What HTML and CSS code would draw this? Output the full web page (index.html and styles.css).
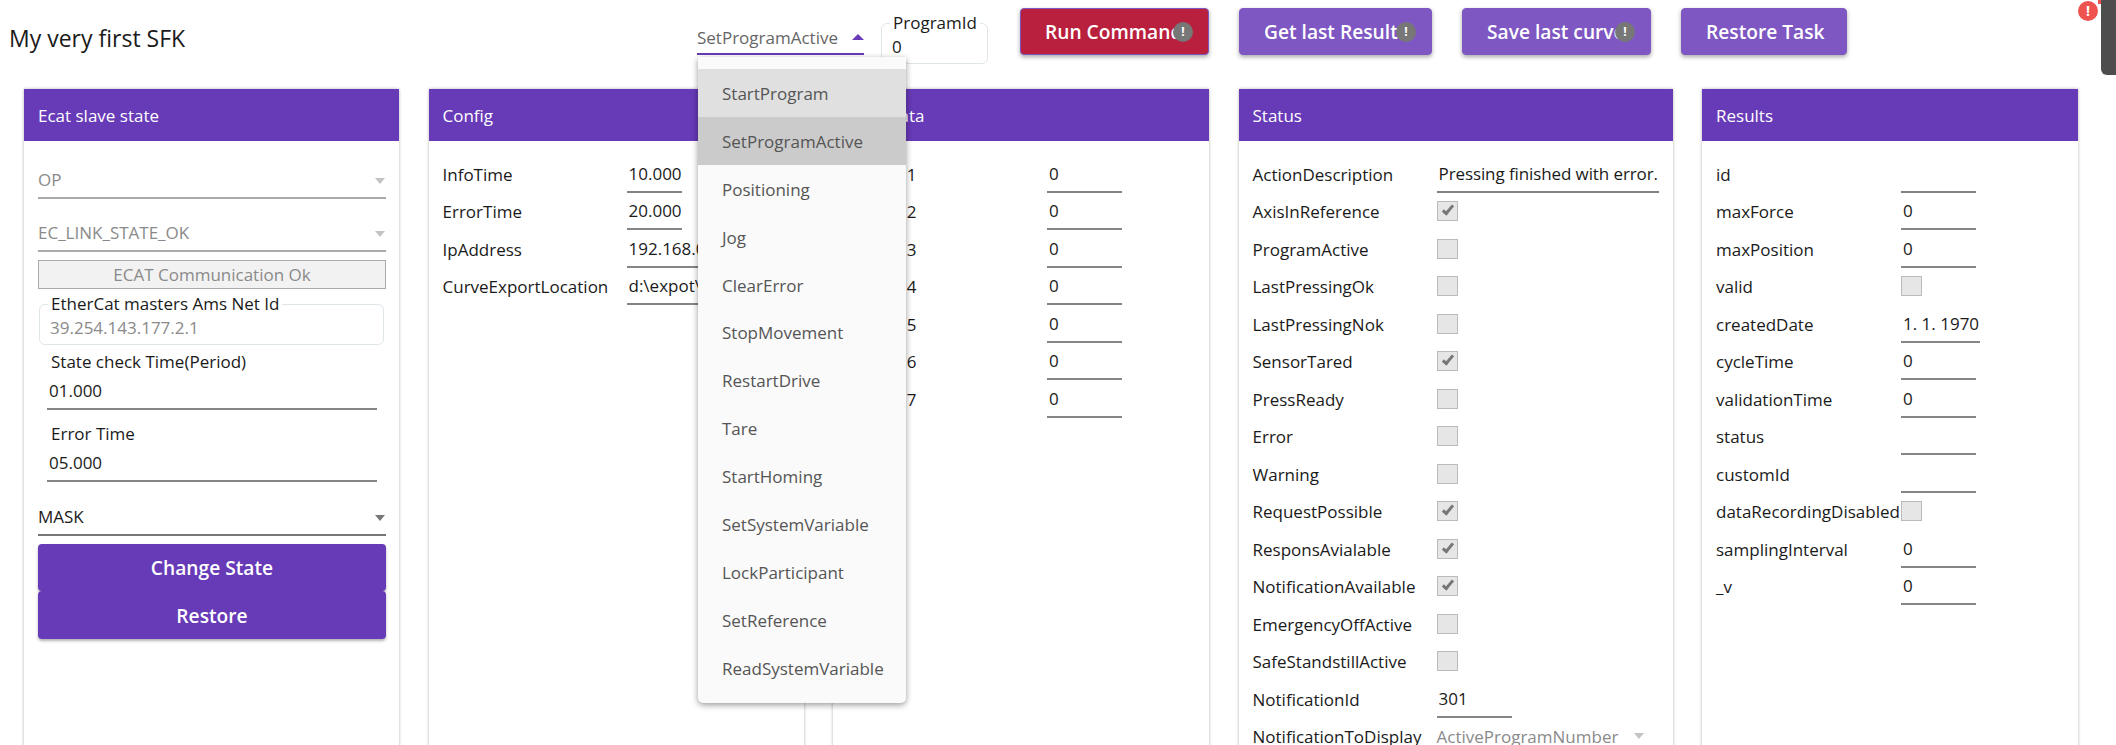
FILE: index.html
```html
<!DOCTYPE html>
<html>
<head>
  <title>My very first SFK</title>
  <link rel="stylesheet" href="styles.css">
</head>
<body>
  <div class="topbar">
    <div class="title">My very first SFK</div>
    <div class="cmd-select">
      <span>SetProgramActive</span>
      <i class="arrow-up"></i>
    </div>
    <fieldset class="box program-id">
      <legend>ProgramId</legend>
      <div>0</div>
    </fieldset>
    <div class="buttons">
      <button class="btn btn-run">Run Command<span class="badge">!</span></button>
      <button class="btn btn-light">Get last Result<span class="badge">!</span></button>
      <button class="btn btn-light">Save last curve<span class="badge">!</span></button>
      <button class="btn btn-light">Restore Task</button>
    </div>
  </div>

  <div class="cards">
    <div class="card">
      <div class="card-head">Ecat slave state</div>
      <div class="card-body slave">
        <div class="select disabled"><span>OP</span><i class="arrow"></i></div>
        <div class="select disabled second"><span>EC_LINK_STATE_OK</span><i class="arrow"></i></div>
        <div class="comm-ok">ECAT Communication Ok</div>
        <fieldset class="box net-id">
          <legend>EtherCat masters Ams Net Id</legend>
          <div>39.254.143.177.2.1</div>
        </fieldset>
        <div class="field-label first">State check Time(Period)</div>
        <div class="val wide">01.000</div>
        <div class="field-label">Error Time</div>
        <div class="val wide">05.000</div>
        <div class="select mask"><span>MASK</span><i class="arrow"></i></div>
        <button class="btn-block change">Change State</button>
        <button class="btn-block restore">Restore</button>
      </div>
    </div>

    <div class="card">
      <div class="card-head">Config</div>
      <div class="card-body rows">
        <div class="row"><span>InfoTime</span><div class="val w55">10.000</div></div>
        <div class="row"><span>ErrorTime</span><div class="val w55">20.000</div></div>
        <div class="row"><span>IpAddress</span><div class="val">192.168.0.10</div></div>
        <div class="row"><span>CurveExportLocation</span><div class="val">d:\expot\curves</div></div>
      </div>
    </div>

    <div class="card">
      <div class="card-head">Task Data</div>
      <div class="card-body rows data">
        <div class="row"><span class="num">Param1</span><div class="val">0</div></div>
        <div class="row"><span class="num">Param2</span><div class="val">0</div></div>
        <div class="row"><span class="num">Param3</span><div class="val">0</div></div>
        <div class="row"><span class="num">Param4</span><div class="val">0</div></div>
        <div class="row"><span class="num">Param5</span><div class="val">0</div></div>
        <div class="row"><span class="num">Param6</span><div class="val">0</div></div>
        <div class="row"><span class="num">Param7</span><div class="val">0</div></div>
      </div>
    </div>

    <div class="card">
      <div class="card-head">Status</div>
      <div class="card-body rows status">
        <div class="row"><span>ActionDescription</span><div class="val w222">Pressing finished with error.</div></div>
        <div class="row"><span>AxisInReference</span><i class="check on"></i></div>
        <div class="row"><span>ProgramActive</span><i class="check"></i></div>
        <div class="row"><span>LastPressingOk</span><i class="check"></i></div>
        <div class="row"><span>LastPressingNok</span><i class="check"></i></div>
        <div class="row"><span>SensorTared</span><i class="check on"></i></div>
        <div class="row"><span>PressReady</span><i class="check"></i></div>
        <div class="row"><span>Error</span><i class="check"></i></div>
        <div class="row"><span>Warning</span><i class="check"></i></div>
        <div class="row"><span>RequestPossible</span><i class="check on"></i></div>
        <div class="row"><span>ResponsAvialable</span><i class="check on"></i></div>
        <div class="row"><span>NotificationAvailable</span><i class="check on"></i></div>
        <div class="row"><span>EmergencyOffActive</span><i class="check"></i></div>
        <div class="row"><span>SafeStandstillActive</span><i class="check"></i></div>
        <div class="row"><span>NotificationId</span><div class="val w75">301</div></div>
        <div class="row"><span>NotificationToDisplay</span><div class="inline-select"><span>ActiveProgramNumber</span><i class="arrow"></i></div></div>
      </div>
    </div>

    <div class="card">
      <div class="card-head">Results</div>
      <div class="card-body rows results">
        <div class="row"><span>id</span><div class="val w75"></div></div>
        <div class="row"><span>maxForce</span><div class="val w75">0</div></div>
        <div class="row"><span>maxPosition</span><div class="val w75">0</div></div>
        <div class="row"><span>valid</span><i class="check"></i></div>
        <div class="row"><span>createdDate</span><div class="val w79">1. 1. 1970</div></div>
        <div class="row"><span>cycleTime</span><div class="val w75">0</div></div>
        <div class="row"><span>validationTime</span><div class="val w75">0</div></div>
        <div class="row"><span>status</span><div class="val w75"></div></div>
        <div class="row"><span>customId</span><div class="val w75"></div></div>
        <div class="row"><span>dataRecordingDisabled</span><i class="check"></i></div>
        <div class="row"><span>samplingInterval</span><div class="val w75">0</div></div>
        <div class="row"><span>_v</span><div class="val w75">0</div></div>
      </div>
    </div>
  </div>

  <div class="dropdown">
    <div class="item hover">StartProgram</div>
    <div class="item selected">SetProgramActive</div>
    <div class="item">Positioning</div>
    <div class="item">Jog</div>
    <div class="item">ClearError</div>
    <div class="item">StopMovement</div>
    <div class="item">RestartDrive</div>
    <div class="item">Tare</div>
    <div class="item">StartHoming</div>
    <div class="item">SetSystemVariable</div>
    <div class="item">LockParticipant</div>
    <div class="item">SetReference</div>
    <div class="item">ReadSystemVariable</div>
  </div>

  <div class="dev-tab"></div>
  <div class="dev-dot"></div>
  <div class="error-dot">!</div>
</body>
</html>
```

FILE: styles.css
```css
html, body {
  height: 745px;
  overflow: hidden;
}

body {
  margin: 0;
  font-family: "Open Sans", Arial, sans-serif;
  font-size: 17px;
  color: #1a1a1a;
  background-color: #fff;
  position: relative;
}

/* top bar */
.topbar {
  display: flex;
  align-items: flex-start;
  height: 89px;
}

.title {
  width: 688px;
  padding-left: 9px;
  font-size: 23px;
  line-height: 76px;
  color: #1a1a1a;
}

.cmd-select {
  width: 167px;
  height: 55px;
  box-sizing: border-box;
  border-bottom: 2px solid #673ab7;
  margin-right: 17px;
  padding-top: 25px;
  line-height: 26px;
  color: #666;
  position: relative;
}

.arrow-up {
  position: absolute;
  right: 0;
  top: 34px;
  border-left: 6px solid transparent;
  border-right: 6px solid transparent;
  border-bottom: 6px solid #673ab7;
}

.box {
  margin: 0;
  border: 1px solid #dfe6ea;
  border-radius: 6px;
  padding: 0 10px 4px;
  line-height: 24px;
  min-width: 0;
}

.box legend {
  padding: 0 3px;
  margin-left: -2px;
}

.program-id {
  width: 107px;
  box-sizing: border-box;
  margin-top: 11px;
  margin-right: 32px;
}

.buttons {
  display: flex;
  gap: 30px;
  padding-top: 8px;
}

.btn {
  position: relative;
  height: 47px;
  padding: 0 24px;
  border: 1px solid #7e57c2;
  border-radius: 4px;
  font-family: inherit;
  font-size: 19.2px;
  font-weight: 600;
  color: #fff;
  text-align: left;
  white-space: nowrap;
  box-shadow: 0 2px 4px rgba(0, 0, 0, 0.35);
}

.btn-run {
  width: 189px;
  background-color: #b8203d;
}

.btn-light {
  background-color: #7e57c2;
}

.btn-light:nth-child(2) {
  width: 193px;
}

.btn-light:nth-child(3) {
  width: 189px;
}

.btn-light:nth-child(4) {
  width: 166px;
}

.badge {
  position: absolute;
  right: 15px;
  top: 13px;
  width: 20px;
  height: 20px;
  border-radius: 50%;
  background-color: #777;
  font-size: 12px;
  font-weight: 700;
  line-height: 20px;
  text-align: center;
}

/* cards */
.cards {
  display: grid;
  grid-template-columns: 375px 375px 376px 434px 376px;
  column-gap: 29.5px;
  padding-left: 24px;
}

.card {
  height: 700px;
  box-shadow: 0 0 3px rgba(0, 0, 0, 0.3);
}

.card-head {
  height: 52px;
  padding-left: 14px;
  background-color: #673ab7;
  color: #fff;
  line-height: 54px;
}

/* slave state */
.slave {
  padding: 21px 13px 0 14px;
}

.select {
  position: relative;
  height: 37px;
  box-sizing: border-box;
  border-bottom: 2px solid #777;
  line-height: 36px;
}

.select.disabled {
  border-bottom-color: #aaa;
  color: #8a8a8a;
}

.select.second {
  margin-top: 16px;
}

.select.mask {
  margin-top: 17px;
}

.arrow {
  position: absolute;
  right: 1px;
  top: 16px;
  border-left: 5.5px solid transparent;
  border-right: 5.5px solid transparent;
  border-top: 6px solid #777;
}

.disabled .arrow,
.inline-select .arrow {
  border-top-color: #c4c4c4;
}

.comm-ok {
  height: 29px;
  box-sizing: border-box;
  margin-top: 8px;
  border: 1px solid #aaa;
  background-color: #f2f2f2;
  color: #8a8a8a;
  line-height: 27px;
  text-align: center;
}

.net-id {
  width: 345px;
  box-sizing: border-box;
  margin: 3px 0 0 1px;
}

.net-id div {
  color: #8a8a8a;
}

.field-label {
  margin-top: 12px;
  padding-left: 13px;
  line-height: 24px;
}

.field-label.first {
  margin-top: 5px;
}

.val {
  height: 36px;
  box-sizing: border-box;
  border-bottom: 2px solid #858585;
  padding-left: 2px;
  line-height: 34px;
  white-space: nowrap;
  overflow: hidden;
}

.val.wide {
  width: 330px;
  margin-left: 9px;
}

.val.w55 {
  width: 55px;
}

.val.w75 {
  width: 75px;
}

.val.w79 {
  width: 79px;
}

.val.w222 {
  width: 222px;
  letter-spacing: -0.1px;
}

.btn-block {
  display: block;
  width: 348px;
  border: none;
  border-radius: 4px;
  background-color: #673ab7;
  color: #fff;
  font-family: inherit;
  font-size: 19.2px;
  font-weight: 600;
  box-shadow: 0 2px 3px rgba(0, 0, 0, 0.3);
}

.btn-block.change {
  height: 47px;
  margin-top: 8px;
}

.btn-block.restore {
  height: 48px;
}

/* label + value rows */
.rows {
  padding: 15.5px 14px 0;
}

.row {
  display: grid;
  grid-template-columns: 184px 1fr;
  height: 37.5px;
  line-height: 36.5px;
  white-space: nowrap;
}

.data .row {
  grid-template-columns: 200px 75px;
}

.data .num {
  padding-left: 8px;
}

.results .row {
  grid-template-columns: 185px 1fr;
}

.check {
  position: relative;
  display: block;
  width: 21px;
  height: 20px;
  box-sizing: border-box;
  margin-top: 7px;
  border: 1px solid #bbb;
  background-color: #e6e6e6;
}

.check.on::after {
  content: "";
  position: absolute;
  left: 7px;
  top: 1px;
  width: 6px;
  height: 12px;
  box-sizing: border-box;
  border-right: 3px solid #777;
  border-bottom: 3px solid #777;
  transform: rotate(40deg);
}

.inline-select {
  position: relative;
  width: 208px;
  color: #8a8a8a;
}

.inline-select .arrow {
  top: 14px;
}

/* open command list */
.dropdown {
  position: absolute;
  left: 698px;
  top: 57px;
  width: 208px;
  height: 646px;
  box-sizing: border-box;
  padding-top: 12px;
  background-color: #fafafa;
  border-radius: 0 0 5px 5px;
  box-shadow: 0 2px 6px rgba(0, 0, 0, 0.4);
}

.item {
  height: 47.9px;
  padding-left: 24px;
  line-height: 49px;
  color: #555;
}

.item.hover {
  background-color: #e0e0e0;
}

.item.selected {
  background-color: #cbcbcb;
}

/* corner bits */
.dev-tab {
  position: absolute;
  right: 0;
  top: 0;
  width: 15px;
  height: 75px;
  background-color: #4d4d4d;
  border-bottom-left-radius: 6px;
}

.dev-dot {
  position: absolute;
  left: 2098px;
  top: 0;
  width: 3px;
  height: 4px;
  background-color: #ef5350;
}

.error-dot {
  position: absolute;
  left: 2078px;
  top: 1px;
  width: 20px;
  height: 20px;
  border-radius: 50%;
  background-color: #ef5350;
  color: #fff;
  font-size: 14px;
  font-weight: 700;
  line-height: 20px;
  text-align: center;
}
```
